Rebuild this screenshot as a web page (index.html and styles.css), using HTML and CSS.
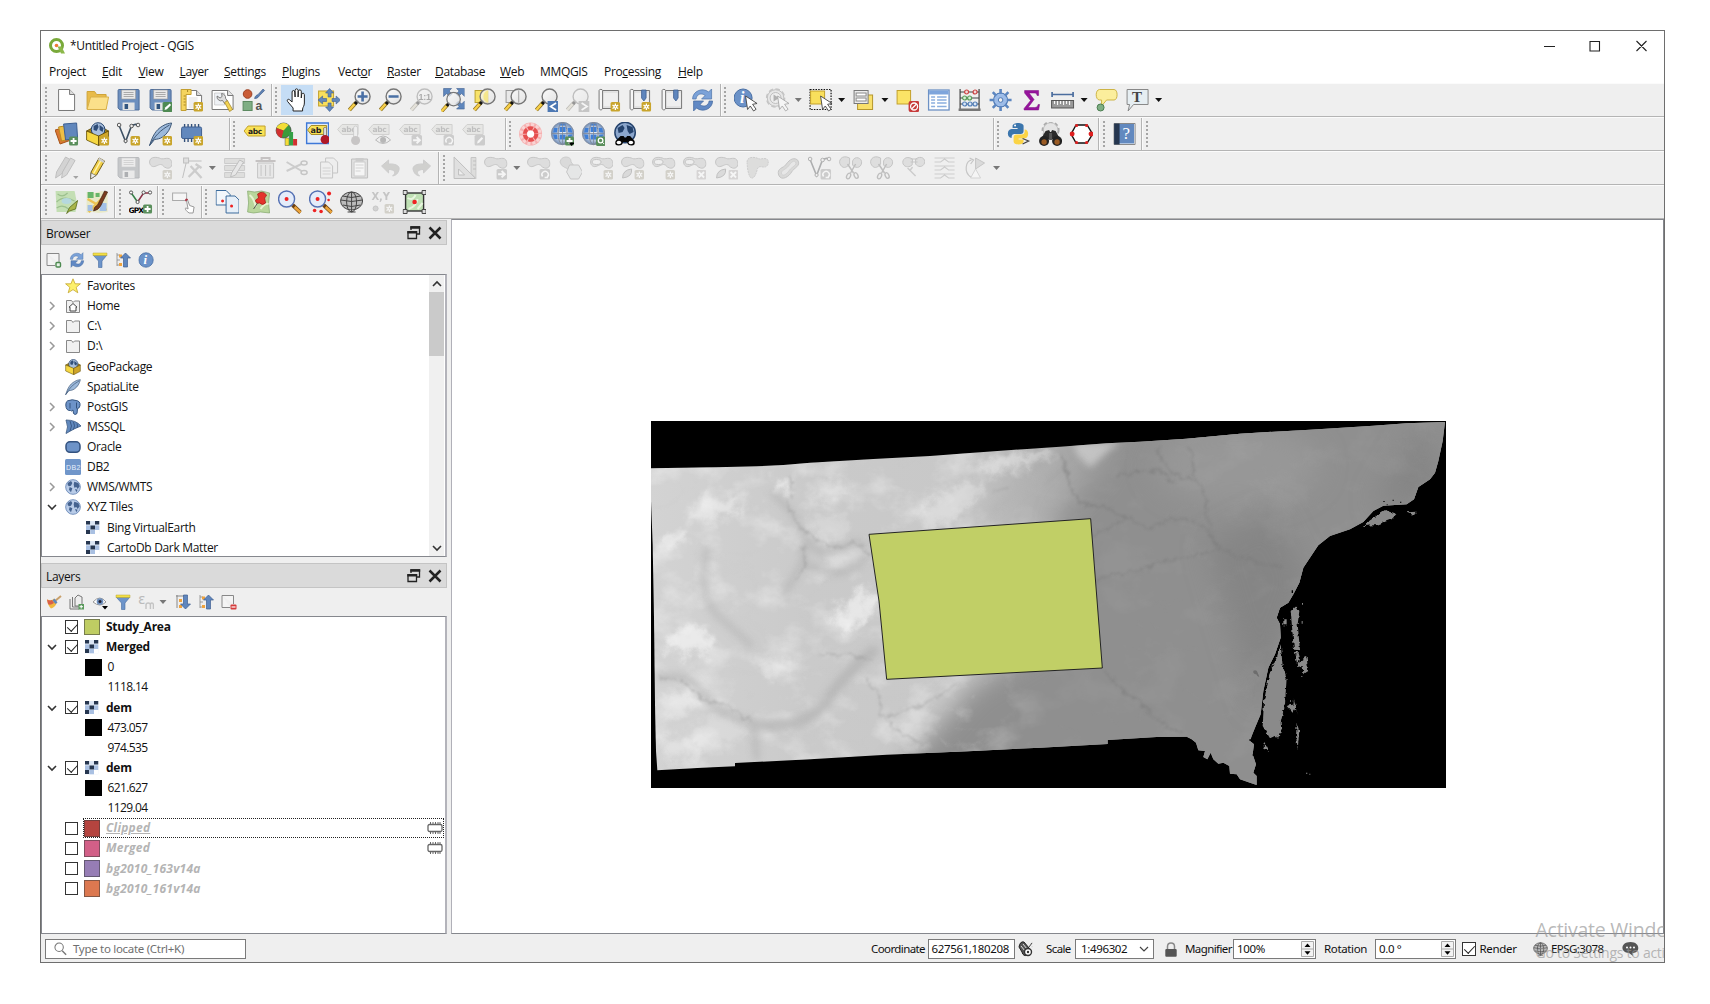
FILE: index.html
```html
<!DOCTYPE html>
<html lang="en">
<head>
<meta charset="utf-8">
<title>*Untitled Project - QGIS</title>
<link rel="stylesheet" href="styles.css">
</head>
<body>
<svg class="sprite" aria-hidden="true">
<defs>
<linearGradient id="lens" x1="0" y1="0" x2="1" y2="1"><stop offset="0" stop-color="#fff"/><stop offset="1" stop-color="#ddd"/></linearGradient>
<radialGradient id="ball"><stop offset="0" stop-color="#f2f5fa"/><stop offset=".6" stop-color="#b9c9e0"/><stop offset="1" stop-color="#6f8db8"/></radialGradient>
<symbol id="star" viewBox="0 0 24 24"><rect x="14" y="14" width="9.500" height="9.500" rx="1.500" fill="#c9a52c"/><path d="M18.800 15.500v6.600M15.900 17.100l5.700 3.400M21.600 17.100l-5.700 3.400" stroke="#fff" stroke-width="1.300"/><circle cx="18.800" cy="18.800" r="1.700" fill="#fff"/><circle cx="18.800" cy="18.800" r=".7" fill="#c9a52c"/></symbol>
<symbol id="plus" viewBox="0 0 24 24"><rect x="14.500" y="14.500" width="9" height="9" rx="1.500" fill="#5a8f5c"/><path d="M19 16v6M16 19h6" stroke="#fff" stroke-width="1.800"/></symbol>
<symbol id="gobadge" viewBox="0 0 24 24"><rect x="13" y="13" width="10.500" height="10.500" rx="1.500" fill="#999"/><path d="M14.500 18.200h6M18 15l3.300 3.200L18 21.400" fill="none" stroke="#fff" stroke-width="1.900"/></symbol>
<symbol id="rotbadge" viewBox="0 0 24 24"><rect x="13" y="13" width="10.500" height="10.500" rx="1.500" fill="#999"/><path d="M16 20.500a3.200 3.200 0 1 1 4.500.6M18 21.500h3.500" fill="none" stroke="#fff" stroke-width="1.500"/></symbol>
<symbol id="xbadge" viewBox="0 0 24 24"><rect x="14" y="14" width="9.500" height="9.500" rx="1" fill="#c3a9a9"/><path d="M16 16l5.500 5.500M21.500 16L16 21.500" stroke="#fff" stroke-width="1.800"/></symbol>
<symbol id="new" viewBox="0 0 24 24"><path d="M4 1.500h11l5 5v16H4z" fill="#fff" stroke="#777"/><path d="M15 1.500v5h5" fill="#ddd" stroke="#777"/></symbol>
<symbol id="open" viewBox="0 0 24 24"><path d="M1.500 21V3.500h7.500l2 3h9.500V21z" fill="#e8bb4a" stroke="#cfa438"/><path d="M1.500 21.500L5 9h18l-2.500 12.500z" fill="#fbe08a" stroke="#d9b14a"/></symbol>
<symbol id="save" viewBox="0 0 24 24"><path d="M2.500 1.500h19a1 1 0 0 1 1 1V22H3.500l-2-2V2.500a1 1 0 0 1 1-1z" fill="#6d8fbe" stroke="#4c6c9a"/><path d="M5 2h14v9H5z" fill="#e9e9e9" stroke="#999" stroke-width=".6"/><path d="M7 4.500h10M7 6.500h10M7 8.500h10" stroke="#999" stroke-width=".8"/><path d="M6 14.500h12V22H6z" fill="#e4e4e4"/><path d="M8 16h3.500v5H8z" fill="#32557f"/></symbol>
<symbol id="saveas" viewBox="0 0 24 24"><use href="#save"/><rect x="14" y="14" width="10" height="10" rx="1.500" fill="#4e8a52"/><path d="M16 22l.6-2.400 4.600-4 1.300 1.500-4.200 4.200z" fill="#fff"/></symbol>
<symbol id="layout" viewBox="0 0 24 24"><path d="M4 2.500h13l5 5v14H4z" fill="#fff" stroke="#777"/><path d="M17 2.500v5h5" fill="#ddd" stroke="#777"/><path d="M1.500 1.500h10v5h-5v16h-5z" fill="#f5d45e" stroke="#c39e2e"/><path d="M4 8h2M4 11h2M4 14h2M4 17h2M8 2v2" stroke="#a98523"/><path d="M9 9h9v11H9z" fill="#eee"/><use href="#star"/></symbol>
<symbol id="manager" viewBox="0 0 24 24"><path d="M1.500 2.500h16l5 5v14h-21z" fill="#fff" stroke="#777"/><path d="M17 2.500v5h5.500" fill="#e5e5e5" stroke="#777"/><path d="M4 5h10v12H4z" fill="#eef1f5" stroke="#bbb" stroke-width=".6"/><path d="M6.500 8a4 4 0 0 0 5.500 4.500l2 3 3-2.200-2-3A4.300 4.300 0 0 0 11 5.500l.5 3-2 1.500z" fill="#ddd" stroke="#666" stroke-width=".8"/><path d="M14 14.500l2.800-2L22 21.500l-3 2z" fill="#f3d354" stroke="#9b7d20" stroke-width=".7"/></symbol>
<symbol id="style" viewBox="0 0 24 24"><circle cx="6" cy="6" r="4.300" fill="#c95c36" stroke="#9c3f20"/><path d="M13 10.500c1-4 3-3 4-4.500L21.500 1l1.500 1.500-5 5c-1 1-1.500 3-5 3z" fill="#5f83b5" stroke="#405f8b" stroke-width=".7"/><rect x="1.500" y="13.500" width="9" height="9" fill="#7fae84" stroke="#5c8a61"/><text x="14" y="22" font-family="Liberation Sans" font-weight="bold" font-size="12" fill="#555">a</text></symbol>
<symbol id="hand" viewBox="0 0 24 24"><path d="M8.500 23v-3L3 13.500c-1-1.500.5-3 2-1.700L7.500 14V4c0-2 2.500-2 2.700 0L10.500 9V2.300c.3-2 2.700-2 3 0V9l.3-5.800c.3-1.800 2.700-1.800 2.900 0V10l.4-3.600c.4-1.700 2.600-1.500 2.700.2V15c0 3-1.500 4-1.800 6v2z" fill="#fff" stroke="#222" stroke-width="1"/></symbol>
<symbol id="pan" viewBox="0 0 24 24"><rect x="2" y="3" width="15" height="15" fill="#f9df5c" stroke="#c3a12c"/><path d="M13 .5l4 4.500h-2.500v4h-3V5H9zM13 23.500l4-4.500h-2.500v-4h-3v4H9zM1.500 12L6 8v2.500h4v3H6V16zM24 12l-4.500-4v2.500h-4v3h4V16z" fill="#6288bd" stroke="#3f5f90" stroke-width=".6"/></symbol>
<symbol id="mag" viewBox="0 0 24 24"><path d="M8.500 14.500L1.800 22" stroke="#8a6f1d" stroke-width="4"/><path d="M7 16L1.800 22" stroke="#f7cf4a" stroke-width="2.600"/><path d="M10.500 12.500L7.500 16" stroke="#111" stroke-width="3"/><circle cx="15" cy="8.500" r="7.500" fill="url(#lens)" fill-opacity=".75" stroke="#777" stroke-width="1.400"/></symbol>
<symbol id="zin" viewBox="0 0 24 24"><use href="#mag"/><path d="M15 3.500v10M10 8.500h10" stroke="#4a70a5" stroke-width="2.600"/></symbol>
<symbol id="zout" viewBox="0 0 24 24"><use href="#mag"/><path d="M10 8.500h10" stroke="#4a70a5" stroke-width="2.600"/></symbol>
<symbol id="z11" viewBox="0 0 24 24"><use href="#mag"/><text x="9" y="12" font-family="Liberation Sans" font-weight="bold" font-size="9" fill="#444">1:1</text></symbol>
<symbol id="zfull" viewBox="0 0 24 24"><path d="M3 .5h8L8.500 3l3 3-2.500 2.500-3-3L3 8.500zM24 .5h-8L18.500 3l-3 3 2.500 2.500 3-3L24 8.500zM24 21h-8l2.500-2.500-3-3 2.500-2.500 3 3 3-3z" fill="#5e86bc" stroke="#3f5f90" stroke-width=".6"/><g transform="translate(-.5 3.500) scale(.9)"><use href="#mag" width="24" height="24"/></g></symbol>
<symbol id="zsel" viewBox="0 0 24 24"><rect x="2.500" y="2.500" width="13" height="12" fill="#f8e36a" stroke="#bba22f"/><use href="#mag"/><path d="M15.500 2.500a6.300 6.300 0 0 0 0 12.200z" fill="#f5e57a" opacity=".8"/></symbol>
<symbol id="zlay" viewBox="0 0 24 24"><rect x="2.500" y="2.500" width="13" height="12" fill="#e8e8e8" stroke="#999"/><use href="#mag"/><path d="M15 2.500v12" stroke="#999" stroke-width=".7"/></symbol>
<symbol id="zlast" viewBox="0 0 24 24"><use href="#mag"/><rect x="13" y="13" width="11" height="11" fill="#4d78b3"/><path d="M21.500 15l-5.500 3.500 5.500 3.500" stroke="#fff" fill="none" stroke-width="1.700"/></symbol>
<symbol id="znext" viewBox="0 0 24 24"><use href="#mag"/><rect x="13" y="13" width="11" height="11" fill="#888"/><path d="M16 15l5.500 3.500L16 22" stroke="#fff" fill="none" stroke-width="1.700"/></symbol>
<symbol id="map" viewBox="0 0 24 24"><path d="M6 2.500h16v18H4" fill="#e2e2e2" stroke="#777"/><path d="M7 5h14v13H7z" fill="#efefef"/><path d="M2.500 2.500c0-1.500 3.500-1.500 3.500 0v17.500c0 2.500-3.500 2.500-3.500 0z" fill="#f6f6f6" stroke="#777"/></symbol>
<symbol id="mapnew" viewBox="0 0 24 24"><use href="#map"/><use href="#star"/></symbol>
<symbol id="mark" viewBox="0 0 24 24"><path d="M14 2h4.500v8l-2.200 3-2.300-3z" fill="#5f86bd" stroke="#3f5f90" stroke-width=".8"/></symbol>
<symbol id="bmnew" viewBox="0 0 24 24"><use href="#map"/><use href="#mark"/><use href="#star"/></symbol>
<symbol id="bm" viewBox="0 0 24 24"><use href="#map"/><use href="#mark"/></symbol>
<symbol id="refresh" viewBox="0 0 24 24"><path d="M2 11C2 3 12-1 18 4l3-3v10H11l3.500-3.500C11 4.500 6 6 5.500 11z" fill="#7ba2d8" stroke="#4d74aa" stroke-width=".7"/><path d="M22 13c0 8-10 12-16 7l-3 3V13h10l-3.500 3.500C13 19.500 18 18 18.500 13z" fill="#6189c4" stroke="#44699e" stroke-width=".7"/></symbol>
<symbol id="cursor" viewBox="0 0 24 24"><path d="M12 8l11.500 7.500-4.500.8 3.500 5-2.500 1.700-3.300-5-2.700 3.500z" fill="#fff" stroke="#444" stroke-width=".9"/></symbol>
<symbol id="info" viewBox="0 0 24 24"><circle cx="9.500" cy="10" r="9" fill="#6b92c8" stroke="#486ea4"/><text x="6.500" y="15.500" font-family="Liberation Serif" font-style="italic" font-weight="bold" font-size="16" fill="#fff">i</text></symbol>
<symbol id="ident" viewBox="0 0 24 24"><use href="#info"/><use href="#cursor"/></symbol>
<symbol id="gear" viewBox="0 0 24 24"><circle cx="12" cy="12" r="7" fill="#a9c6ee" stroke="#4d78b4" stroke-width="1.200"/><path d="M12 1v5M12 18v5M1 12h5M18 12h5M4.200 4.200l3.600 3.600M16.200 16.200l3.600 3.600M4.200 19.800l3.600-3.600M16.200 7.800l3.600-3.600" stroke="#5c86c0" stroke-width="2.600"/><circle cx="12" cy="12" r="6" fill="#9dbce8"/><circle cx="12" cy="12" r="2.300" fill="#efefef" stroke="#4d78b4"/></symbol>
<symbol id="action" viewBox="0 0 24 24"><circle cx="10" cy="10" r="8.300" fill="#ddd" stroke="#777" stroke-width="1"/><circle cx="10" cy="10" r="9" fill="none" stroke="#888" stroke-width="1.600" stroke-dasharray="4.500 2.500"/><circle cx="10" cy="10" r="5.500" fill="#eee" stroke="#777"/><path d="M8 6.500l5.500 3.500L8 13.500z" fill="#555"/><use href="#cursor"/></symbol>
<symbol id="select" viewBox="0 0 24 24"><rect x="1.500" y="1.500" width="21" height="20" fill="#efefef" stroke="#111" stroke-width="1.200" stroke-dasharray="1.500 1.200"/><rect x="2" y="3" width="14" height="13" fill="#f9df5c" stroke="#c3a12c"/><use href="#cursor"/></symbol>
<symbol id="selform" viewBox="0 0 24 24"><rect x="6" y="7" width="15" height="14.500" fill="#f9e06a" stroke="#b5962c"/><rect x="2.500" y="2.500" width="14" height="13" fill="#eee" stroke="#777"/><rect x="4.500" y="5" width="10" height="3" fill="#fff" stroke="#888"/><rect x="4.500" y="10" width="10" height="3" fill="#fff" stroke="#888"/></symbol>
<symbol id="desel" viewBox="0 0 24 24"><rect x="1.500" y="2.500" width="13.500" height="13.500" fill="#fbe366" stroke="#c3a12c"/><rect x="13" y="13" width="11" height="11" rx="2" fill="#c73b3b"/><circle cx="18.500" cy="18.500" r="3.500" fill="none" stroke="#fff" stroke-width="1.300"/><path d="M16 21l5-5" stroke="#fff" stroke-width="1.200"/></symbol>
<symbol id="table" viewBox="0 0 24 24"><rect x="2" y="2" width="20.500" height="20" fill="#fff" stroke="#6d91c5" stroke-width="1.300"/><path d="M2.500 2.500h19.500v4H2.500z" fill="#7ea5dc"/><path d="M4.500 9h4M10.500 9h9.500M4.500 12h4M10.500 12h9.500M4.500 15h4M10.500 15h9.500M4.500 18.500h4M10.500 18.500h9.500" stroke="#8aaede" stroke-width="1.700"/></symbol>
<symbol id="abacus" viewBox="0 0 24 24"><path d="M2.500 1v20M21.500 1v20M2 4h20M2 10h20M2 16h20" stroke="#444" stroke-width="1.200"/><path d="M1 20.500h22V23H1z" fill="#777"/><g stroke-width="1.200" fill="#f1dada" stroke="#c44"><circle cx="9" cy="4" r="2"/><circle cx="17.500" cy="4" r="2"/></g><g stroke-width="1.200" fill="#d8f0d8" stroke="#5a9a5a"><circle cx="7" cy="10" r="2"/><circle cx="12" cy="10" r="2"/></g><g stroke-width="1.200" fill="#dae6f6" stroke="#5580b8"><circle cx="7" cy="16" r="2"/><circle cx="12.500" cy="16" r="2"/><circle cx="17.500" cy="16" r="2"/></g></symbol>
<symbol id="sigma" viewBox="0 0 24 24"><path d="M5 2.500h14v5h-1.500c-.5-2-1-2.500-3-2.500H9.500l5 6.500-6 8h6.500c2.500 0 3-1 3.500-3H20l-1 5.500H4.500v-1.500l6.500-8-6-7.500z" fill="#96149c" stroke="#7b0f80" stroke-width=".5"/></symbol>
<symbol id="ruler" viewBox="0 0 24 24"><path d="M1.500 6.500h21M1.500 4v5M22.500 4v5" stroke="#4b6d9e" stroke-width="1.700"/><rect x="1" y="12.500" width="22" height="7.500" fill="#999" stroke="#555"/><path d="M4 13v3M7 13v4M10 13v3M13 13v4M16 13v3M19 13v4" stroke="#fff" stroke-width="1"/></symbol>
<symbol id="tip" viewBox="0 0 24 24"><path d="M5 1.500h14.500c4 0 4 10.500 0 10.500H12l-5 6V12H5c-4.500 0-4.500-10.500 0-10.500z" fill="#fbee9c" stroke="#cdb445"/><circle cx="6" cy="19.500" r="3.500" fill="#7fae84" stroke="#4b7d50"/></symbol>
<symbol id="text" viewBox="0 0 24 24"><path d="M1.500 1.500h21v15H8l-5.500 6.500 1.500-6.500H1.500z" fill="#e6eef2" stroke="#888"/><text x="6.500" y="14" font-family="Liberation Serif" font-weight="bold" font-size="15" fill="#444">T</text></symbol>
<symbol id="dsm" viewBox="0 0 24 24"><path d="M.5 8l12-3 4 13-11 4z" fill="#d97832" stroke="#a75217"/><path d="M4 5l12-2 3 13-12 3z" fill="#eebf45" stroke="#ba8d22"/><path d="M9 2l13-1 1 15-12 2z" fill="#6187bc" stroke="#3d5f92"/><use href="#plus"/></symbol>
<symbol id="gpkg" viewBox="0 0 24 24"><path d="M1 9l11-6 11 6-10 5z" fill="#a5821c" stroke="#5f4a00" stroke-width=".8"/><circle cx="12.500" cy="7.500" r="6.800" fill="#a9bfdd" stroke="#24446f"/><path d="M8 4l4-2 1 3-2 4-3-1zM14 3l4 3-1 4-3-2z" fill="#2f4d78"/><path d="M1 9l12 5v9.500L1 18z" fill="#f6d843" stroke="#5f4a00" stroke-width=".8"/><path d="M13 14l10-5v9.500l-10 5z" fill="#cfa52a" stroke="#5f4a00" stroke-width=".8"/></symbol>
<symbol id="gpkgn" viewBox="0 0 24 24"><use href="#gpkg"/><use href="#star"/></symbol>
<symbol id="vee" viewBox="0 0 24 24"><path d="M2.500 3.500l6.500 16L14.500 5q3-4 7-2" fill="none" stroke="#3c5064" stroke-width="1.600"/><g fill="#efefef" stroke="#555"><circle cx="2.500" cy="3" r="1.800"/><circle cx="9" cy="19" r="1.600"/><circle cx="15" cy="4" r="1.800"/><circle cx="21.500" cy="3" r="1.800"/></g></symbol>
<symbol id="veen" viewBox="0 0 24 24"><use href="#vee"/><use href="#star"/></symbol>
<symbol id="feather" viewBox="0 0 24 24"><path d="M1 23.500C4 14 7 8 14 4c4-2.500 6-2.500 9-3-1 5-4 11-9 14-3 2-5 2-8 2.500z" fill="#9cb9db" stroke="#3d5675"/><path d="M1 23.500C6 14 12 8 21 3" fill="none" stroke="#3d5675"/></symbol>
<symbol id="feathern" viewBox="0 0 24 24"><use href="#feather"/><use href="#star"/></symbol>
<symbol id="chip" viewBox="0 0 24 24"><path d="M5 2v18M8.500 2v18M12 2v18M15.500 2v18M19 2v18" stroke="#33507a" stroke-width="1.400"/><rect x="2" y="5" width="20" height="11.500" rx="1.500" fill="#6288bd" stroke="#3f5f90"/></symbol>
<symbol id="chipn" viewBox="0 0 24 24"><use href="#chip"/><use href="#star"/></symbol>
<symbol id="abc" viewBox="0 0 24 24"><path d="M1.500 9l4-5h17v10h-17z" fill="#f9e256" stroke="#c3a12c"/><text x="5.500" y="12" font-family="DejaVu Sans" font-weight="bold" font-size="7.500" fill="#222">abc</text></symbol>
<symbol id="abcg" viewBox="0 0 24 24"><path d="M1 7.500l4.500-5h16v10h-16z" fill="#ddd9c6" stroke="#a9a48c"/><text x="5" y="10.500" font-family="DejaVu Sans" font-weight="bold" font-size="7.500" fill="#777">abc</text></symbol>
<symbol id="pie" viewBox="0 0 24 24"><circle cx="9" cy="8.500" r="7.500" fill="#3b9a3b" stroke="#444" stroke-width=".7"/><path d="M9 8.500L2 6a7.500 7.500 0 0 1 12-3z" fill="#f3dd36"/><path d="M9 8.500L2 6c-1 4 0 8 5 10z" fill="#d13030"/><path d="M10.500 16h4v7.500h-4z" fill="#f3dd36" stroke="#555" stroke-width=".5"/><path d="M14.500 10h4v13.500h-4z" fill="#35a046"/><path d="M18.500 17h4v6.500h-4z" fill="#d13030"/></symbol>
<symbol id="abpin" viewBox="0 0 24 24"><rect x="1" y="1" width="22" height="20.500" fill="#e4ecf8" stroke="#3d78d8" stroke-width="1.500"/><path d="M2 8l3.500-4.500H21v9H5.500z" fill="#f9e256" stroke="#a48c28"/><text x="5" y="11.500" font-family="DejaVu Sans" font-weight="bold" font-size="8" fill="#222">ab</text><path d="M18 6a2 2 0 0 1 3 0v8h-3z" fill="#ddd" stroke="#555" stroke-width=".6"/><circle cx="19.500" cy="17.500" r="4.500" fill="#b01827"/></symbol>
<symbol id="abpg" viewBox="0 0 24 24"><use href="#abcg"/><path d="M17 6a2 2 0 0 1 4 0v10h-4z" fill="#eee" stroke="#888" stroke-width=".7"/><circle cx="19" cy="18.500" r="4.500" fill="#a88080"/></symbol>
<symbol id="abeye" viewBox="0 0 24 24"><use href="#abcg"/><path d="M8 18q7.500-8 15 0-7.500 7-15 0z" fill="#eee" stroke="#666"/><circle cx="15.500" cy="18" r="3" fill="#666"/></symbol>
<symbol id="abgo" viewBox="0 0 24 24"><use href="#abcg"/><use href="#gobadge"/></symbol>
<symbol id="abrot" viewBox="0 0 24 24"><use href="#abcg"/><use href="#rotbadge"/></symbol>
<symbol id="abed" viewBox="0 0 24 24"><use href="#abcg"/><rect x="13" y="13" width="10.500" height="10.500" rx="1.500" fill="#999"/><path d="M15.500 21.500l.6-2.400 4-4 1.500 1.500-4 4.200z" fill="#fff"/></symbol>
<symbol id="ring" viewBox="0 0 24 24"><circle cx="12" cy="12" r="11.500" fill="#f6b0b0"/><circle cx="12" cy="12" r="9.500" fill="none" stroke="#f9d4d4" stroke-width="3" stroke-dasharray="3 2"/><circle cx="12" cy="12" r="5.800" fill="none" stroke="#e65050" stroke-width="4" stroke-dasharray="5 1"/><circle cx="12" cy="12" r="3.500" fill="#fff"/></symbol>
<symbol id="globe" viewBox="0 0 24 24"><circle cx="12" cy="11.500" r="11.200" fill="url(#ball)" stroke="#8792a4"/><path d="M9 5h6v5H9zM9 12.500h6v5H9zM3.500 6H7l-.5 4.500H2.500zM2.500 12.500h4l.5 4.500H4zM17 6h3.500l1.200 4.500h-4zM17.700 12.500h4L20 17h-3zM9 1.500h6v2H9z" fill="#3f7fd6"/><ellipse cx="12" cy="11.500" rx="4.500" ry="11" fill="none" stroke="#7c8798"/><path d="M12 1v21M1 11.500h22" fill="none" stroke="#7c8798" stroke-width=".8"/></symbol>
<symbol id="globe1" viewBox="0 0 24 24"><use href="#globe"/><use href="#plus"/><path d="M18 20.500h6l-3 3.500z"/></symbol>
<symbol id="globe2" viewBox="0 0 24 24"><use href="#globe"/><rect x="14.500" y="14.500" width="9.500" height="9.500" rx="1.500" fill="#5a8f5c"/><circle cx="19" cy="18.500" r="2.300" fill="none" stroke="#fff" stroke-width="1.300"/><path d="M20.500 20l2 2" stroke="#fff"/></symbol>
<symbol id="earth" viewBox="0 0 24 24"><circle cx="12" cy="12" r="11" fill="#b9cce8" stroke="#6f8dbb" stroke-width="1.400"/><path d="M4 6l5-3 2 3-2 4-3 1-2-2zM7 12l4 2-2 6-3-4zM14 4l6 2 2 5-3 4-2-3-3 1-1-5zM15 15l4 1-2 4z" fill="#44628f"/></symbol>
<symbol id="binoc" viewBox="0 0 24 24"><path d="M7 9l3.500-1 1 2h1l1-2L17 9l4.500 8H2.500z" fill="#2a2a2a"/><path d="M10.500 11h3v7h-3z" fill="#555"/><circle cx="5.500" cy="19" r="5" fill="#222"/><circle cx="18.500" cy="19" r="5" fill="#222"/></symbol>
<symbol id="search" viewBox="0 0 24 24"><circle cx="12.500" cy="10.500" r="10.200" fill="#8ba6cc" stroke="#24426c" stroke-width="1.500"/><path d="M5 6l5-3 2 3-2 4-4 1zM14 3l6 2 1 5-4 2-2-3z" fill="#24426c"/><path d="M8 14h3l1 1.500h1.500l1-1.500h3l4.500 5q1 4.500-3 4.500-4 0-4.500-3.500h-4Q10 23.500 6 23.500q-4.500 0-3-4.500z" fill="#050505"/><ellipse cx="6.300" cy="20.500" rx="2.300" ry="1.700" fill="#fff"/><ellipse cx="18.300" cy="20.500" rx="2.300" ry="1.700" fill="#fff"/></symbol>
<symbol id="python" viewBox="0 0 24 24"><path d="M6 6V4c0-4 11-4 11 0v5c0 2-1 3-3 3H8c-2 0-3 1-3 4-5 0-5-9 0-9h6V6z" fill="#3c76ad"/><path d="M18 7.500c5 0 4.500 9 0 9h-6v1h5v2c0 4-10 4-10 0v-4c0-2 1-3 3-3h5c2 0 3-1 3-3z" fill="#fbd446"/><circle cx="8.500" cy="3.500" r="1" fill="#fff"/><path d="M16 16.500l6 2.500-6 3" fill="none" stroke="#444" stroke-width="1.300"/></symbol>
<symbol id="binog" viewBox="0 0 24 24"><circle cx="12" cy="8" r="8" fill="none" stroke="#aaa" stroke-width="2" stroke-dasharray="3.500 2.500"/><circle cx="12" cy="8" r="7.300" fill="#e4e4e4" stroke="#b5b5b5" stroke-width=".8"/><use href="#binoc"/><circle cx="5.500" cy="20" r="2.700" fill="#9a5b24"/><circle cx="18.500" cy="20" r="2.700" fill="#9a5b24"/></symbol>
<symbol id="hex" viewBox="0 0 24 24"><path d="M6.500 3h11L23 12l-5.500 9h-11L1.500 12z" fill="#fff" stroke="#111" stroke-width="1.400"/><g fill="#df2020"><circle cx="2.500" cy="12" r="2.500"/><circle cx="21.500" cy="12" r="2.500"/><circle cx="7" cy="3.500" r="1.600"/><circle cx="17" cy="3.500" r="1.600"/><circle cx="7" cy="20.500" r="1.600"/><circle cx="17" cy="20.500" r="1.600"/></g></symbol>
<symbol id="help" viewBox="0 0 24 24"><path d="M1.500 1.500h21v21h-21z" fill="#fff" stroke="#888"/><path d="M6 2h15.500v19.500H6z" fill="#6289bf"/><path d="M1.500 1.500H7v21H1.500z" fill="#25364f"/><text x="10" y="17.500" font-family="Liberation Serif" font-size="17" fill="#fff">?</text></symbol>
<symbol id="pencils" viewBox="0 0 24 24"><path d="M1 22l1-6L11 1l4.500 2.500L7 18z" fill="#aaa" stroke="#777"/><path d="M7 22l1-6 8-14 4.500 2.500L12 19z" fill="#b5b5b5" stroke="#777"/><path d="M18.500 20h5.500l-2.700 3z" fill="#333"/></symbol>
<symbol id="pencil" viewBox="0 0 24 24"><path d="M5 23l.5-7L13.500 2l5.500 3-8 14z" fill="#f2cf47" stroke="#6d5b1c"/><path d="M5.500 17l5 2.500L5 23z" fill="#eee" stroke="#555" stroke-width=".6"/><path d="M13.500 1.500L19 5l-1 2-5.500-3z" fill="#ccc"/><path d="M15 5L8 17.500" stroke="#fff5b0" stroke-width="1.500"/></symbol>
<symbol id="blob" viewBox="0 0 24 24"><path d="M1 6c0-6 8-5 11-3.500 3 1.500 9-3 11 3 1.500 5-2 7.500-5 6.500-4-1-3-3.500-6-3.500S6 12 3 10C1.500 9 1 7.500 1 6z" fill="#c4c4c4" stroke="#888"/></symbol>
<symbol id="blobn" viewBox="0 0 24 24"><use href="#blob"/><use href="#star"/></symbol>
<symbol id="nodes" viewBox="0 0 24 24"><path d="M3 22L7 5h15" fill="none" stroke="#777"/><rect x="4" y="2" width="5" height="5" fill="#ccc" stroke="#777"/><path d="M9 21l10-10M11 10l11 12M16 8l6 4" stroke="#999" stroke-width="2.400"/></symbol>
<symbol id="rows" viewBox="0 0 24 24"><path d="M2 2.500h20v5H2zM2 9.500h20v5H2zM2 16.500h20v5H2z" fill="#c9c9ae" stroke="#999"/><path d="M8 21l1-4 8-13 4 2-8 13z" fill="#ddd" stroke="#777"/></symbol>
<symbol id="trash" viewBox="0 0 24 24"><path d="M4 7h16v15H4z" fill="#ddd" stroke="#888"/><path d="M7.500 9v11M12 9v11M16.500 9v11" stroke="#888"/><path d="M2 5h20M8 4V2h8v2" fill="none" stroke="#a77" stroke-width="2"/></symbol>
<symbol id="cut" viewBox="0 0 24 24"><path d="M2 6l15 9M2 15l15-7" stroke="#999" stroke-width="2"/><ellipse cx="19.500" cy="7" rx="3" ry="2" fill="none" stroke="#888" stroke-width="1.500"/><ellipse cx="19.500" cy="16.500" rx="3" ry="2" fill="none" stroke="#888" stroke-width="1.500"/></symbol>
<symbol id="copy" viewBox="0 0 24 24"><path d="M9 2h8l4 4v11H9z" fill="#eee" stroke="#888"/><path d="M4 6h8l4 4v12H4z" fill="#eee" stroke="#888"/><path d="M6 12h8M6 15h8M6 18h8" stroke="#aaa"/></symbol>
<symbol id="paste" viewBox="0 0 24 24"><path d="M4 3h16v19H4z" fill="#ccc" stroke="#777"/><path d="M6.500 6h11v14h-11z" fill="#fff" stroke="#999"/><path d="M8 2h8v3.500H8z" fill="#999"/><path d="M8 9h8M8 12h8M8 15h5" stroke="#aaa"/></symbol>
<symbol id="undo" viewBox="0 0 24 24"><path d="M3 10l7-6v4c9-.5 12 3 10 7-1 3-3 4.500-6 5 4-3.500 2-6.500-4-6.500V17z" fill="#aaa28c" stroke="#999"/></symbol>
<symbol id="square" viewBox="0 0 24 24"><path d="M1.500 1v21.500H23zM6 13l6 6H6z" fill="#ccc" stroke="#777" fill-rule="evenodd"/><path d="M18.500 1.500h5v21l-5-5z" fill="#c9c4b0" stroke="#888"/><path d="M20.500 5h3M20.500 9h3M20.500 13h3" stroke="#777"/></symbol>
<symbol id="bgo" viewBox="0 0 24 24"><use href="#blob"/><use href="#gobadge"/></symbol>
<symbol id="brot" viewBox="0 0 24 24"><use href="#blob"/><use href="#rotbadge"/></symbol>
<symbol id="simp" viewBox="0 0 24 24"><path d="M1.500 6q1-5 6-5t5 5l3 4-4 5q-3-3-6-4T1.500 6z" fill="#bbb" stroke="#999"/><path d="M11 9h9l4 7-4 7h-8l-4-7z" fill="#d5d9df" stroke="#888"/></symbol>
<symbol id="bring" viewBox="0 0 24 24"><use href="#blob"/><ellipse cx="7" cy="6" rx="4.500" ry="2.500" fill="#efefef" stroke="#888"/><use href="#star"/></symbol>
<symbol id="bpart" viewBox="0 0 24 24"><use href="#blob"/><path d="M2 22q0-8 9-9 1 8-9 9z" fill="#bbb" stroke="#777"/><use href="#star"/></symbol>
<symbol id="bdelr" viewBox="0 0 24 24"><use href="#blob"/><ellipse cx="7" cy="6" rx="4.500" ry="2.500" fill="#efefef" stroke="#888"/><use href="#xbadge"/></symbol>
<symbol id="bdelp" viewBox="0 0 24 24"><use href="#blob"/><path d="M2 22q0-8 9-9 1 8-9 9z" fill="#bbb" stroke="#777"/><use href="#xbadge"/></symbol>
<symbol id="bshape" viewBox="0 0 24 24"><path d="M1.500 6c0-6 8-5 11-3.500 3 1.500 8-2 10 2 1 5-2 7-5 6.500-3-.5-5-1-6 3s-3 9-6 8c-3-2-4-12-4-16z" fill="#c4c4bc" stroke="#999" stroke-dasharray="2 .8"/></symbol>
<symbol id="boff" viewBox="0 0 24 24"><path d="M2 19c-2-7 5-7 7-10s7-9 12-5c4 6-4 8-6 12s-10 10-13 3z" fill="#bdb9ae" stroke="#888"/><path d="M5 18c-1-4 4-4 7-8s5-6 7-4c2 3-4 5-6 8s-6 7-8 4z" fill="#ddd" stroke="#999" stroke-width=".7"/></symbol>
<symbol id="vrot" viewBox="0 0 24 24"><use href="#vee"/><use href="#rotbadge"/></symbol>
<symbol id="split" viewBox="0 0 24 24"><path d="M11 2C3-2-1 5 2 9c3 5 8 1 9-1zM14 5c2-6 10-3 9 2-1 6-7 5-9 2z" fill="#c4c8c4" stroke="#888"/><path d="M9 8l6 9M17 8l-5 9" stroke="#777" stroke-width="1.500"/><ellipse cx="10" cy="20" rx="1.800" ry="3" transform="rotate(25 10 20)" fill="none" stroke="#777" stroke-width="1.400"/><ellipse cx="17.500" cy="19.500" rx="1.800" ry="3" transform="rotate(-25 17.500 19.500)" fill="none" stroke="#777" stroke-width="1.400"/></symbol>
<symbol id="merge" viewBox="0 0 24 24"><path d="M11 3C4-1 0 4 1.500 8c2 4 7 3 9 1zM14 3c6-4 10 0 9 4-2 5-7 4-9 1zM9 3h7M9 6h7" fill="#c4c8c4" stroke="#888"/><path d="M6 12l8 8M11 11l-3 4" stroke="#999" stroke-width="1.500"/></symbol>
<symbol id="trim" viewBox="0 0 24 24"><path d="M2 2h20M2 6h6l4-3 4 3h6M2 10h20M2 14h6l4-3 4 3h6M2 18h20M2 22h6l4-3 4 3h6" fill="none" stroke="#999" stroke-width="1.100"/></symbol>
<symbol id="rotf" viewBox="0 0 24 24"><path d="M12 2v11l9-6z" fill="#bbb" stroke="#888"/><path d="M10 21H7C0 16 2 5 8 4M6 2l4 2-3 4" fill="none" stroke="#888" stroke-width="1.200"/><path d="M7 22l5-9 5 9z" fill="#fff" stroke="#aaa"/></symbol>
<symbol id="relief" viewBox="0 0 24 24"><path d="M1 1h19l2 10-1 11H2z" fill="#c4dfb4"/><path d="M3 4q5 4 10-1M2 12q7-7 18-1M2 18q6-4 12 1" fill="none" stroke="#9cc08e" stroke-width="1.200"/><ellipse cx="12" cy="11" rx="5" ry="3" fill="#b5d8de"/><path d="M12 23.500l3-6 8-7-2 8.500-6 2z" fill="#a9b64a" stroke="#57691b" stroke-width=".8"/></symbol>
<symbol id="osm" viewBox="0 0 24 24"><path d="M1 2l8 1 7-2 6 1v20l-9 1-6-1-6 1z" fill="#e8e9c8"/><path d="M3 22L16 9M2 9l19 11" stroke="#ecc253" stroke-width="2.500"/><path d="M14 13h7v8h-7zM2 15h5v6H2z" fill="#a3c0e6"/><path d="M2 2h6v6H2zM10 3h4v4h-4z" fill="#67b56a"/><path d="M8 21q0-4 4-6L19 1l3 1-7 14q-2 4-7 5z" fill="#7b3c1d" stroke="#402010" stroke-width=".7"/></symbol>
<symbol id="gpx" viewBox="0 0 24 24"><path d="M9 12l6-9h6" fill="none" stroke="#8b3348" stroke-width="1.500"/><path d="M2 2l7 10" stroke="#357f46" stroke-width="1.500"/><g fill="#fff" stroke="#555"><circle cx="2.500" cy="2.500" r="1.600"/><circle cx="9" cy="12" r="1.600"/><circle cx="15" cy="2.500" r="1.600"/><circle cx="21.500" cy="2.500" r="1.600"/></g><text x="0" y="23.500" font-family="DejaVu Sans" font-weight="bold" font-size="7.500" textLength="15">GPX</text><use href="#plus"/></symbol>
<symbol id="annot" viewBox="0 0 24 24"><rect x="1" y="3" width="14" height="7.500" fill="#f5f5f5" stroke="#aaa"/><circle cx="15" cy="10" r="1.500" fill="#a34"/><path d="M15 11l1.500 8-2-1c-2 0 0 3 3 5h4l1-6-4.500-1.500L16 10" fill="#fff" stroke="#999"/></symbol>
<symbol id="coord" viewBox="0 0 24 24"><path d="M.5.500h10l4 4V15h-14z" fill="#f3f7fb" stroke="#3a6a9c"/><path d="M10.500 6h9l4 4v13h-13z" fill="#e6eff8" stroke="#3a6a9c"/><circle cx="7" cy="11" r="1.500" fill="#e22"/><circle cx="16" cy="16" r="1.500" fill="#e22"/></symbol>
<symbol id="pin" viewBox="0 0 24 24"><path d="M1 1l7 1 7-1 8 2-1 10 1 10-9-1-7 1-6-1 1-9z" fill="#b9d69c" stroke="#83a86c" stroke-width=".7"/><path d="M3 5q5 4 6 12M14 19q4-6 8-5" fill="none" stroke="#e8f3d2" stroke-width="2"/><path d="M11 13l-4 6" stroke="#555"/><path d="M11 4q5-4 9 1-1 2-2 3l1 5q-3 3-6 0-4 1-4-3l3-2z" fill="#e4342c" stroke="#a01815" stroke-width=".7"/></symbol>
<symbol id="mag2" viewBox="0 0 24 24"><path d="M15 15l8 7.500" stroke="#6b4013" stroke-width="3.800"/><path d="M17 17l6 5.500" stroke="#eda53b" stroke-width="2.600"/><circle cx="9" cy="9" r="8" fill="#e4ecfa" stroke="#5571b4" stroke-width="1.400"/><circle cx="9" cy="9" r="2" fill="#e22"/></symbol>
<symbol id="mag3" viewBox="0 0 24 24"><use href="#mag2"/><g fill="#e22"><circle cx="20.500" cy="3.500" r="2"/><circle cx="20" cy="10" r="1.300"/><circle cx="6" cy="20.500" r="1.800"/><circle cx="12.500" cy="21.500" r="1.800"/></g></symbol>
<symbol id="wire" viewBox="0 0 24 24"><ellipse cx="12" cy="11" rx="11" ry="9" fill="#bbb" stroke="#444"/><ellipse cx="12" cy="12" rx="5" ry="10" fill="none" stroke="#444"/><path d="M12 2v20M1 10q11 3 22 0M3 15q9 3 18 0M3 6q9 3 18 0M8 22h8" fill="none" stroke="#444"/></symbol>
<symbol id="xy" viewBox="0 0 24 24"><text x="1" y="10" font-family="DejaVu Sans" font-weight="bold" font-size="10" fill="#888" textLength="18">X,Y</text><circle cx="5" cy="18.500" r="2.500" fill="#aaa" stroke="#888"/><use href="#star"/></symbol>
<symbol id="ext" viewBox="0 0 24 24"><rect x="3" y="3" width="18" height="18" fill="#bfe0b4" stroke="#333" stroke-width="1.400"/><path d="M5 8q5 3 8-3M6 19q7-2 9-10M15 19l5-6" stroke="#e9f5df" stroke-width="2" fill="none"/><g fill="#ddd" stroke="#444"><path d="M.5.500h4v4h-4zM19.500.500h4v4h-4zM.5 19.500h4v4h-4zM19.500 19.500h4v4h-4z"/></g><circle cx="12" cy="12" r="2.300" fill="#e22"/></symbol>
<symbol id="add" viewBox="0 0 16 16"><path d="M1 1.500h12v9M9 13.500H1v-12" fill="#f4f4f4" stroke="#888"/><rect x="10" y="10.500" width="4.500" height="4.500" rx="1" fill="#e8f3e8" stroke="#4d8a50" stroke-width="1.400"/></symbol>
<symbol id="funnel" viewBox="0 0 16 16"><path d="M1 3h14l-5 6v6.500H6.500V9z" fill="#6d94ca" stroke="#466c9f" stroke-width=".6"/><path d="M1 1h14v2.500H1z" fill="#f3df45" stroke="#b9a430" stroke-width=".5"/></symbol>
<symbol id="up" viewBox="0 0 16 16"><path d="M2 1v13M2 3h3M2 8h3M2 13h3" stroke="#888" stroke-width=".8"/><path d="M4 2.500h3v3H4zM4 11h3v3H4z" fill="#f0a33c"/><path d="M10.500 1L15.500 6h-3v9h-4V6h-3z" fill="#5f86bd" stroke="#3f5f90" stroke-width=".7"/></symbol>
<symbol id="down" viewBox="0 0 16 16"><path d="M2 1v13M1 2h8" stroke="#888"/><path d="M4 5h3v3H4zM4 11h3v3H4z" fill="#f0a33c"/><path d="M10.500 15L15.500 10h-3V1h-4v9h-3z" fill="#5f86bd" stroke="#3f5f90" stroke-width=".7"/></symbol>
<symbol id="broom" viewBox="0 0 16 16"><path d="M9 7l6-5" stroke="#c9a06a" stroke-width="2"/><path d="M1 5.500q5 2 7-1l3 4q-2 5-6 6Q2 12 1 5.500z" fill="#f1b83f"/><path d="M6.500 6.500l2-2 3 4-2 1.500z" fill="#5f86bd"/><path d="M1 5.500q3 1.500 5 .5l2 3Q4 12 2 10z" fill="#d9604a"/></symbol>
<symbol id="layadd" viewBox="0 0 16 16"><path d="M1 5v10h9M3.500 3v10h7M6 4l3-3 4 2v9H6z" fill="#eee" stroke="#777"/><rect x="9.500" y="10" width="5.500" height="5.500" fill="#5a9a5c"/><path d="M12.200 11v3.500M10.500 12.700H14" stroke="#fff"/></symbol>
<symbol id="eye" viewBox="0 0 16 16"><path d="M1 8q7-8 13 0-6 6-13 0z" fill="#fff" stroke="#999"/><circle cx="8" cy="7.500" r="3.300" fill="#6d8fbe"/><circle cx="8" cy="7.500" r="1.500" fill="#223"/><path d="M10 12h6l-3 3.500z"/></symbol>
<symbol id="eps" viewBox="0 0 16 16"><text x="0" y="10" font-family="DejaVu Sans" font-size="14" fill="#bbb">ε</text><path d="M8 15v-4q0-2 2.200-2t2.200 2v4M12.400 11q0-2 1.500-2t1.500 2v4" fill="none" stroke="#c4c4c4" stroke-width="1.400"/></symbol>
<symbol id="rem" viewBox="0 0 16 16"><path d="M1 1.500h11.500V10M9 13.500H1v-12" fill="#f4f4f4" stroke="#888"/><rect x="9.500" y="10.500" width="6" height="5" rx="1" fill="#d43c3c"/><path d="M10.500 13h4" stroke="#fff" stroke-width="1.200"/></symbol>
<symbol id="fav" viewBox="0 0 16 16"><path d="M8 .8l2.100 5h5.300l-4.200 3.500 1.600 5.500L8 11.600l-4.800 3.200 1.600-5.500L.6 5.800h5.300z" fill="#fdf06a" stroke="#c4a62d" stroke-width=".8"/></symbol>
<symbol id="folder" viewBox="0 0 16 16"><path d="M1.500 2.500h5l1.500 2 1.500-1.500H14.500v11.500h-13z" fill="#f1f1f1" stroke="#888"/></symbol>
<symbol id="home" viewBox="0 0 16 16"><use href="#folder"/><path d="M8 5.500l4 3.700h-1V13H5V9.200H4z" fill="#fff" stroke="#444"/></symbol>
<symbol id="pg" viewBox="0 0 16 16"><path d="M4 1.500q3-1.500 7 0 4.500.5 4 5-.5 3-2.500 3l-.5 5q-2 2-3.500 0L8 11l-1.500 1-1-.5Q1 12 .8 6 1 1.500 4 1.500z" fill="#6d93c8" stroke="#34547f"/><path d="M5 4v5.500M11.500 3.500v6" stroke="#34547f" fill="none"/></symbol>
<symbol id="ms" viewBox="0 0 16 16"><path d="M1 1q10 0 15 6Q10 9 1 14.500 4 8 1 1z" fill="#6088bd" stroke="#34547f" stroke-width=".8"/><path d="M5 2q3 5 0 10M8.500 3q2 4 0 7.500M12 4.500q1 2.500 0 4.500" fill="none" stroke="#34547f" stroke-width=".9"/></symbol>
<symbol id="ora" viewBox="0 0 16 16"><rect x="1" y="2.800" width="14" height="10.500" rx="4" fill="#6d93c8" stroke="#33527f" stroke-width="1.500"/></symbol>
<symbol id="db2" viewBox="0 0 16 16"><rect width="16" height="16" rx="1.500" fill="#7096ca"/><text x="1" y="10.500" font-family="Liberation Sans" font-size="7" fill="#e6eefa" textLength="14">DB2</text></symbol>
<symbol id="tile" viewBox="0 0 15 15"><path d="M0 0h15v15H0z" fill="#dce6f4"/><path d="M0 5h5v5H0zM10 5h5v5h-5zM5 10h5v5H5z" fill="#a9c0e2"/><path d="M0 0h4.500v4H0zM10 0h5v4h-5zM5 5h5v4.500H5zM0 10h4.500v4.500H0z" fill="#26364f"/><path d="M10 10h5v5h-5z" fill="#fff"/></symbol>
<symbol id="mem" viewBox="0 0 16 14"><path d="M3.500 1v12M6 1v12M8.500 1v12M11 1v12M13 1v12" stroke="#666"/><rect x="1" y="3.500" width="14" height="7" rx="1.500" fill="#fff" stroke="#666" stroke-width="1.300"/></symbol>
<symbol id="float" viewBox="0 0 16 16"><path d="M5 5V2h8.500v7h-3M2 7h8.500v6.500H2z" fill="none" stroke="#222" stroke-width="1.300"/><path d="M4.300 2.500h9.900M1.300 7.300h9.900" stroke="#222" stroke-width="2.600"/></symbol>
<symbol id="close" viewBox="0 0 16 16"><path d="M2.500 2.500l11 11M13.500 2.500l-11 11" stroke="#222" stroke-width="2.500"/></symbol>
<symbol id="right" viewBox="0 0 12 12"><path d="M4 2l4 4-4 4" fill="none" stroke="#999" stroke-width="1.500"/></symbol>
<symbol id="open2" viewBox="0 0 12 12"><path d="M2 4l4 4 4-4" fill="none" stroke="#333" stroke-width="1.600"/></symbol>
</defs>
</svg>

<main class="window">
<header class="title">
<svg class="logo" viewBox="0 0 16 16"><circle cx="7.500" cy="7.500" r="6" fill="none" stroke="#79a93a" stroke-width="3"/><path d="M8.500 8.500h4l3.500 7h-4z" fill="#8cb84a"/><circle cx="7.500" cy="7.500" r="1.800" fill="#ee7a35"/></svg>
<span>*Untitled Project - QGIS</span>
<svg class="ctl" viewBox="0 0 104 12"><path d="M0 6.500h11M46 1.500h9.500v9.500H46zM92.500 1l10 10M102.500 1l-10 10" fill="none" stroke="#222" stroke-width="1.100"/></svg>
</header>
<nav class="menu"><span>Pro<u>j</u>ect</span><span><u>E</u>dit</span><span><u>V</u>iew</span><span><u>L</u>ayer</span><span><u>S</u>ettings</span><span><u>P</u>lugins</span><span>Vect<u>o</u>r</span><span><u>R</u>aster</span><span><u>D</u>atabase</span><span><u>W</u>eb</span><span>MMQGIS</span><span>Pro<u>c</u>essing</span><span><u>H</u>elp</span></nav>

<section class="bars">
<div class="row">
<div class="seg w230"><svg><use href="#new"/></svg><svg><use href="#open"/></svg><svg><use href="#save"/></svg><svg><use href="#saveas"/></svg><svg><use href="#layout"/></svg><svg><use href="#manager"/></svg><svg><use href="#style"/></svg></div>
<div class="seg w448"><svg class="on"><use href="#hand"/></svg><svg><use href="#pan"/></svg><svg><use href="#zin"/></svg><svg><use href="#zout"/></svg><svg class="off"><use href="#z11"/></svg><svg><use href="#zfull"/></svg><svg><use href="#zsel"/></svg><svg><use href="#zlay"/></svg><svg><use href="#zlast"/></svg><svg class="off"><use href="#znext"/></svg><svg><use href="#mapnew"/></svg><svg><use href="#bmnew"/></svg><svg><use href="#bm"/></svg><svg><use href="#refresh"/></svg></div>
<div class="seg rest"><svg><use href="#ident"/></svg><svg class="off"><use href="#action"/></svg><i class="dd dim"></i><svg><use href="#select"/></svg><i class="dd"></i><svg><use href="#selform"/></svg><i class="dd"></i><svg><use href="#desel"/></svg><svg><use href="#table"/></svg><svg><use href="#abacus"/></svg><svg><use href="#gear"/></svg><svg><use href="#sigma"/></svg><svg><use href="#ruler"/></svg><i class="dd"></i><svg><use href="#tip"/></svg><svg><use href="#text"/></svg><i class="dd"></i></div>
</div>
<div class="row">
<div class="seg w188"><svg><use href="#dsm"/></svg><svg><use href="#gpkgn"/></svg><svg><use href="#veen"/></svg><svg><use href="#feathern"/></svg><svg><use href="#chipn"/></svg></div>
<div class="seg w276"><svg><use href="#abc"/></svg><svg><use href="#pie"/></svg><svg><use href="#abpin"/></svg><svg class="off"><use href="#abpg"/></svg><svg class="off"><use href="#abeye"/></svg><svg class="off"><use href="#abgo"/></svg><svg class="off"><use href="#abrot"/></svg><svg class="off"><use href="#abed"/></svg></div>
<div class="seg w488"><svg><use href="#ring"/></svg><svg><use href="#globe1"/></svg><svg><use href="#globe2"/></svg><svg><use href="#search"/></svg></div>
<div class="seg w105"><svg><use href="#python"/></svg><svg><use href="#binog"/></svg><svg><use href="#hex"/></svg></div>
<div class="seg w43"><svg><use href="#help"/></svg></div>
<div class="seg rest"></div>
</div>
<div class="row">
<div class="seg w398"><svg class="off"><use href="#pencils"/></svg><svg><use href="#pencil"/></svg><svg class="off"><use href="#save"/></svg><svg class="off"><use href="#blobn"/></svg><svg class="off"><use href="#nodes"/></svg><i class="dd dim"></i><svg class="off"><use href="#rows"/></svg><svg class="off"><use href="#trash"/></svg><svg class="off"><use href="#cut"/></svg><svg class="off"><use href="#copy"/></svg><svg class="off"><use href="#paste"/></svg><svg class="off"><use href="#undo"/></svg><svg class="off flip"><use href="#undo"/></svg></div>
<div class="seg rest"><svg class="off"><use href="#square"/></svg><svg class="off"><use href="#bgo"/></svg><i class="dd dim"></i><svg class="off"><use href="#brot"/></svg><svg class="off"><use href="#simp"/></svg><svg class="off"><use href="#bring"/></svg><svg class="off"><use href="#bpart"/></svg><svg class="off"><use href="#bring"/></svg><svg class="off"><use href="#bdelr"/></svg><svg class="off"><use href="#bdelp"/></svg><svg class="off"><use href="#bshape"/></svg><svg class="off"><use href="#boff"/></svg><svg class="off"><use href="#vrot"/></svg><svg class="off"><use href="#split"/></svg><svg class="off"><use href="#split"/></svg><svg class="off"><use href="#merge"/></svg><svg class="off"><use href="#trim"/></svg><svg class="off"><use href="#rotf"/></svg><i class="dd dim"></i></div>
</div>
<div class="row">
<div class="seg w74"><svg><use href="#relief"/></svg><svg><use href="#osm"/></svg></div>
<div class="seg w43"><svg><use href="#gpx"/></svg></div>
<div class="seg w43"><svg><use href="#annot"/></svg></div>
<div class="seg rest"><svg><use href="#coord"/></svg><svg><use href="#pin"/></svg><svg><use href="#mag2"/></svg><svg><use href="#mag3"/></svg><svg><use href="#wire"/></svg><svg class="off"><use href="#xy"/></svg><svg><use href="#ext"/></svg></div>
</div>
</section>

<section class="work">
<aside class="docks">
<div class="dockhead"><span>Browser</span><svg><use href="#float"/></svg><svg><use href="#close"/></svg></div>
<div class="docktools"><svg><use href="#add"/></svg><svg><use href="#refresh"/></svg><svg><use href="#funnel"/></svg><svg><use href="#up"/></svg><svg viewBox="0 0 19 20"><use href="#info" width="24" height="24"/></svg></div>
<div class="tree browser">
<ul>
<li><b></b><svg><use href="#fav"/></svg>Favorites</li>
<li><b><svg><use href="#right"/></svg></b><svg><use href="#home"/></svg>Home</li>
<li><b><svg><use href="#right"/></svg></b><svg><use href="#folder"/></svg>C:\</li>
<li><b><svg><use href="#right"/></svg></b><svg><use href="#folder"/></svg>D:\</li>
<li><b></b><svg><use href="#gpkg"/></svg>GeoPackage</li>
<li><b></b><svg><use href="#feather"/></svg>SpatiaLite</li>
<li><b><svg><use href="#right"/></svg></b><svg><use href="#pg"/></svg>PostGIS</li>
<li><b><svg><use href="#right"/></svg></b><svg><use href="#ms"/></svg>MSSQL</li>
<li><b></b><svg><use href="#ora"/></svg>Oracle</li>
<li><b></b><svg><use href="#db2"/></svg>DB2</li>
<li><b><svg><use href="#right"/></svg></b><svg><use href="#earth"/></svg>WMS/WMTS</li>
<li><b><svg><use href="#open2"/></svg></b><svg><use href="#earth"/></svg>XYZ Tiles</li>
<li class="sub"><b></b><svg><use href="#tile"/></svg>Bing VirtualEarth</li>
<li class="sub"><b></b><svg><use href="#tile"/></svg>CartoDb Dark Matter</li>
</ul>
<div class="scroll"><svg class="flipv"><use href="#open2"/></svg><i></i><svg><use href="#open2"/></svg></div>
</div>
<div class="dockhead second"><span>Layers</span><svg><use href="#float"/></svg><svg><use href="#close"/></svg></div>
<div class="docktools low"><svg><use href="#broom"/></svg><svg><use href="#layadd"/></svg><svg><use href="#eye"/></svg><svg><use href="#funnel"/></svg><svg><use href="#eps"/></svg><i class="dd dim"></i><svg><use href="#down"/></svg><svg><use href="#up"/></svg><svg><use href="#rem"/></svg></div>
<div class="tree layers">
<ul>
<li class="lay"><b></b><em class="ck y"></em><i class="sw olive"></i>Study_Area</li>
<li class="lay"><b><svg><use href="#open2"/></svg></b><em class="ck y"></em><svg class="ras"><use href="#tile"/></svg>Merged</li>
<li class="leg"><i class="sw black"></i>0</li>
<li class="leg"><i class="sw"></i>1118.14</li>
<li class="lay"><b><svg><use href="#open2"/></svg></b><em class="ck y"></em><svg class="ras"><use href="#tile"/></svg>dem</li>
<li class="leg"><i class="sw black"></i>473.057</li>
<li class="leg"><i class="sw"></i>974.535</li>
<li class="lay"><b><svg><use href="#open2"/></svg></b><em class="ck y"></em><svg class="ras"><use href="#tile"/></svg>dem</li>
<li class="leg"><i class="sw black"></i>621.627</li>
<li class="leg"><i class="sw"></i>1129.04</li>
<li class="lay hid cur"><b></b><em class="ck"></em><div><i class="sw red"></i><u>Clipped</u><svg class="mem"><use href="#mem"/></svg></div></li>
<li class="lay hid"><b></b><em class="ck"></em><div><i class="sw pink"></i>Merged<svg class="mem"><use href="#mem"/></svg></div></li>
<li class="lay hid"><b></b><em class="ck"></em><i class="sw violet"></i>bg2010_163v14a</li>
<li class="lay hid"><b></b><em class="ck"></em><i class="sw orange"></i>bg2010_161v14a</li>
</ul>
</div>
</aside>

<div class="canvas">
<svg class="raster" viewBox="33 30 2385 1101">
<defs>
<clipPath id="land"><path d="M33 172L230 169 350 166 430 162 510 155 700 144 870 135 1000 125 1260 107 1400 97 1500 92 1640 83 1800 68 2010 56 2200 44 2300 37 2415 33 2408 90 2395 150 2385 185 2370 205 2335 228 2322 265 2300 280 2230 284 2200 300 2170 333 2130 355 2070 375 2035 403 2010 440 1990 470 1978 515 1960 550 1945 575 1920 590 1910 620 1920 640 1922 680 1905 730 1885 770 1870 840 1862 910 1845 950 1835 975 1830 990 1842 1000 1838 1030 1848 1060 1840 1085 1850 1095 1850 1122 1830 1115 1800 1105 1790 1090 1770 1088 1768 1065 1750 1055 1735 1058 1720 1045 1712 1025 1702 1045 1690 1038 1695 1020 1675 1018 1668 995 1655 985 1640 977 1550 978 1403 987 1403 999 1200 1010 1000 1020 740 1031 510 1045 285 1056 285 1066 185 1070 52 1078 48 1020 45 880 42 620 38 400 33 270z"/></clipPath>
<linearGradient id="base"><stop offset="0" stop-color="#d3d3d3"/><stop offset=".2" stop-color="#cacaca"/><stop offset=".38" stop-color="#c8c8c8"/><stop offset=".55" stop-color="#a0a0a0"/></linearGradient>
<linearGradient id="fade" x1="0" x2="1"><stop offset=".38" stop-color="#fff"/><stop offset=".5" stop-color="#222"/></linearGradient>
<mask id="west" maskUnits="userSpaceOnUse" x="0" y="0" width="2450" height="1150"><rect width="2450" height="1150" fill="url(#fade)"/></mask>
<filter id="b40" x="-50%" y="-50%" width="200%" height="200%"><feGaussianBlur stdDeviation="38"/></filter>
<filter id="b14" x="-50%" y="-50%" width="200%" height="200%"><feTurbulence type="fractalNoise" baseFrequency=".022" numOctaves="5" seed="9" result="n"/><feGaussianBlur in="SourceGraphic" stdDeviation="13" result="g"/><feDisplacementMap in="g" in2="n" scale="75" xChannelSelector="R" yChannelSelector="G"/></filter>
<filter id="soft" x="-50%" y="-50%" width="200%" height="200%"><feGaussianBlur stdDeviation="11"/></filter>
<filter id="b3" x="-10%" y="-10%" width="120%" height="120%"><feTurbulence type="fractalNoise" baseFrequency=".05" numOctaves="3" seed="4" result="n"/><feDisplacementMap in="SourceGraphic" in2="n" scale="28" xChannelSelector="R" yChannelSelector="G"/><feGaussianBlur stdDeviation="2.500"/></filter>
<filter id="rough" x="-2%" y="-2%" width="104%" height="104%"><feTurbulence type="fractalNoise" baseFrequency=".09" numOctaves="2" seed="7" result="n"/><feDisplacementMap in="SourceGraphic" in2="n" scale="12" xChannelSelector="R" yChannelSelector="G"/></filter>
<filter id="light" x="0" y="0" width="100%" height="100%"><feTurbulence type="fractalNoise" baseFrequency=".008 .01" numOctaves="8" seed="11"/><feColorMatrix values="0 0 0 0 1  0 0 0 0 1  0 0 0 0 1  3 0 0 0 -1.400"/></filter>
<filter id="dark" x="0" y="0" width="100%" height="100%"><feTurbulence type="turbulence" baseFrequency=".006 .007" numOctaves="5" seed="23"/><feColorMatrix values="0 0 0 0 .6  0 0 0 0 .6  0 0 0 0 .6  0 -5 0 0 .9"/></filter>
</defs>
<rect x="33" y="30" width="2385" height="1101"/>
<g clip-path="url(#land)">
<rect x="33" y="30" width="2385" height="1101" fill="url(#base)"/>
<path d="M1440 60L1380 190 1270 300 1220 700 1000 830 880 960 700 1180H2600V-60H1500z" fill="#8f8f8f" filter="url(#b40)"/>
<ellipse cx="1790" cy="160" rx="250" ry="120" fill="#979797" filter="url(#b40)"/>
<path d="M1900 300L1700 400 1850 900 2000 500zM2350 30L2200 280H2420z" fill="#858585" filter="url(#b40)"/>
<g fill="#fff" filter="url(#b14)" opacity=".55"><ellipse cx="150" cy="690" rx="75" ry="40"/><ellipse cx="430" cy="228" rx="30" ry="20"/><ellipse cx="570" cy="240" rx="70" ry="30" opacity=".5"/><ellipse cx="650" cy="600" rx="80" ry="40" transform="rotate(-35 650 600)"/><ellipse cx="930" cy="280" rx="110" ry="40" opacity=".6" transform="rotate(-30 930 280)"/><ellipse cx="1120" cy="150" rx="130" ry="22" opacity=".7" transform="rotate(-12 1120 150)"/><ellipse cx="110" cy="880" rx="50" ry="45" opacity=".6"/><ellipse cx="230" cy="290" rx="90" ry="30" opacity=".7" transform="rotate(-15 230 290)"/><ellipse cx="100" cy="390" rx="60" ry="14" transform="rotate(-40 100 390)"/><ellipse cx="560" cy="350" rx="60" ry="40" opacity=".4"/><ellipse cx="420" cy="770" rx="60" ry="25" opacity=".6"/><ellipse cx="240" cy="960" rx="80" ry="50" opacity=".4"/><ellipse cx="120" cy="1010" rx="70" ry="40" opacity=".6"/></g>
<path d="M1310 130L1350 170 1410 115 1440 95H1300z" fill="#ccc" filter="url(#soft)" opacity=".8"/>
<g mask="url(#west)"><rect x="33" y="30" width="2385" height="1101" filter="url(#light)" opacity=".32"/><rect x="33" y="30" width="2385" height="1101" filter="url(#dark)" opacity=".22"/></g>
<g fill="none" stroke="#b2b2b2" stroke-linecap="round" filter="url(#soft)" opacity=".75"><path stroke-width="32" d="M340 940Q500 960 560 870T700 720"/><path stroke-width="16" d="M400 250Q470 310 500 380T600 410 690 430M490 400V450Q450 520 440 540M500 460Q600 520 680 440M60 800Q140 780 190 850T340 930L350 1040"/><path stroke-width="22" opacity=".7" d="M200 420Q170 560 240 620T330 700M1060 300Q1150 230 1250 150"/></g>
<g fill="none" stroke="#787878" stroke-width="5" opacity=".48" filter="url(#b3)"><path d="M1270 130L1290 230 1320 275 1400 290 1460 320 1530 350 1590 325 1650 325 1700 355 1740 415 1640 440 1560 450 1500 480 1400 495 1370 510M1650 110L1665 200 1695 250 1700 310 1725 400 1800 440 1920 470M1550 115L1600 190 1660 210M1430 190L1560 175 1600 215M1350 380L1460 320M1390 780L1450 840 1500 870 1540 920 1620 965"/></g>
<g fill="none" stroke="#9c9c9c" stroke-width="5" opacity=".5" filter="url(#b3)"><path d="M440 270L480 350 530 385 600 415 640 390 690 430M490 400L500 460 470 500M60 800L130 810 180 860 250 880 330 930M680 800L720 860 720 910 760 950 850 1000M740 920L850 880 950 820M540 730H620L700 750M1100 230L1060 240M455 190V260"/></g>
<path d="M1840 779q10-4 12 4l6 14q-6 2-9-7-11-1-9-11z" fill="#6d6d6d"/>
</g>
<g fill="#8a8a8a" filter="url(#rough)"><path d="M2172 345L2190 325 2235 297 2270 308 2255 325 2210 342zM2300 304L2330 302 2325 314zM1952 600L1970 585 1978 600 1973 640 1980 718 1962 716zM1922 700L1928 765 1940 800 1935 880 1922 935 1925 965 1890 982 1868 945 1872 870 1888 790 1910 740zM1965 722L1975 724 1980 740 1978 755 1990 748 1990 735 2000 740 2005 780 1990 790 1988 765 1972 768zM1870 990L1885 1020 1872 1012zM1970 935L1978 960 1973 1015 1968 975zM1940 885L1960 880 1962 865 1975 915 1968 890 1958 905zM1930 625h10v18h-10zM1905 975L1920 965 1915 980z"/></g>
<path d="M2230 270h4v3h-4zM2258 266h3v4h-3zM2280 272h4v3h-4zM2240 280h3v3h-3zM1955 538h4v8h-4zM1828 985h5v4h-5zM1838 1030h5v4h-5zM1842 1078h5v5h-5zM1966 726h3v8h-3zM1974 748h4v6h-4z" fill="#000"/>
<path d="M1998 1085h4v3h-4zM2008 1088h3v3h-3zM1985 630h3v8h-3zM1986 576h3v5h-3zM1984 795h3v3h-3zM1950 868h3v4h-3z" fill="#888"/>
<path d="M687 370L1352 323 1387 771 740 805 717 570z" fill="#c1cf66" stroke="#232323" stroke-width="3"/>
</svg>
</div>
</section>

<footer class="status">
<label class="locate"><svg viewBox="0 0 16 16"><circle cx="7" cy="6" r="4.800" fill="none" stroke="#777" stroke-width="1.200"/><path d="M10.500 10l4.500 4.500" stroke="#777" stroke-width="1.600"/></svg>Type to locate (Ctrl+K)</label>
<span>Coordinate</span><span class="box">627561,180208</span>
<svg class="ic" viewBox="0 0 16 16"><path d="M1 6q1-6 5-5l5 6q2 5-1 7-5 2-6-3z" fill="#555" stroke="#222"/><path d="M3 5l4 5M5 3l4 5M12 3l3-2M13 6l2-.5" stroke="#ddd"/><circle cx="10" cy="11" r="3.500" fill="#fff" stroke="#333" stroke-width="1.400"/><circle cx="10" cy="11" r="1.200" fill="#333"/><path d="M11 6l3-4" stroke="#444"/></svg>
<span>Scale</span><span class="box combo">1:496302<svg viewBox="0 0 12 12"><path d="M2 4l4 4 4-4" fill="none" stroke="#444" stroke-width="1.200"/></svg></span>
<svg class="ic lock" viewBox="0 0 12 15"><path d="M2.500 7V4.500q0-3.500 3.500-3.500t3.500 3.500V7" fill="none" stroke="#888" stroke-width="1.500"/><rect x=".3" y="7" width="11.400" height="7.700" rx="1" fill="#555"/></svg>
<span>Magnifier</span><span class="box spin">100%<svg viewBox="0 0 13 16"><path d="M.5.500h12v15H.5zM.5 8h12" fill="#f3f3f3" stroke="#aaa"/><path d="M3.500 6L6.500 2.500 9.500 6zM3.500 10.200l3 3.500 3-3.500z"/></svg></span>
<span>Rotation</span><span class="box spin">0.0 °<svg viewBox="0 0 13 16"><path d="M.5.500h12v15H.5zM.5 8h12" fill="#f3f3f3" stroke="#aaa"/><path d="M3.500 6L6.500 2.500 9.500 6zM3.500 10.200l3 3.500 3-3.500z"/></svg></span>
<em class="ck y"></em><span class="up1">Render</span>
<svg class="ic"><use href="#wire"/></svg><span class="up1">EPSG:3078</span>
<svg class="ic bub" viewBox="0 0 17 16"><path d="M8.500 1c10 0 10 11 2 11l.5 3-4-3C-2 12-2 1 8.500 1z" fill="#555"/><g fill="#fff"><circle cx="5" cy="6.500" r="1"/><circle cx="8.500" cy="6.500" r="1"/><circle cx="12" cy="6.500" r="1"/></g></svg>
</footer>
<div class="mark"><p>Activate Windows</p><p class="small">Go to Settings to activate Windows.</p></div>
</main>
</body>
</html>
```
FILE: styles.css
```css
* { box-sizing: border-box; }
body { margin: 0; height: 1004px; background: #fff; overflow: hidden; padding: 30px 0 0 40px; font: 12px/16px "Open Sans", "Noto Sans", sans-serif; color: #111; letter-spacing: -0.33px; }
.sprite { position: absolute; width: 0; height: 0; }
svg { display: block; flex: none; }
u { text-underline-offset: 1px; text-decoration-thickness: 1px; }
.window { position: relative; width: 1625px; height: 933px; border: 1px solid #6e6e6e; background: #efefef; overflow: hidden; display: flex; flex-direction: column; }
.title { height: 29px; flex: none; background: #fff; display: flex; align-items: center; padding: 0 16px 0 8px; }
.title span { margin-left: 5px; flex: 1; }
.logo { width: 16px; height: 16px; }
.ctl { width: 104px; height: 12px; }
.menu { height: 23px; flex: none; background: #fff; padding: 1px 0 0 8px; display: grid; grid-template-columns: 53px 36.500px 41px 44.500px 58px 56px 49px 48px 65px 40px 64px 74px 60px; align-items: center; white-space: nowrap; }

.bars { flex: none; }
.row { display: flex; height: 34px; border-bottom: 1px solid #b4b4b4; border-top: 1px solid #fbfbfb; }
.seg { display: flex; align-items: center; border-right: 1px solid #b4b4b4; flex: none; box-shadow: inset 1px 0 #fafafa; }
.seg::before { content: ""; width: 3px; height: 26px; margin: 0 3.200px 0 3.800px; background: radial-gradient(circle at 1px 1px, #a5a5a5 1px, transparent 1.300px) 0 0 / 3px 4px; }
.seg svg { width: 31.180px; height: 24px; padding: 0 3.600px; }
.seg.rest { flex: 1; border-right: 0; }
.seg svg.on { height: 30px; padding: 3px 3.600px; background: #c5ddf5; }
.off { filter: grayscale(.85); opacity: .4; }
.flip { transform: scaleX(-1); }
.flipv { transform: scaleY(-1); }
.dd { width: 12.150px; height: 4px; flex: none; background: #111; clip-path: polygon(2px 0, 9px 0, 5.500px 4px); }
.dd.dim { background: #777; }
.w230 { width: 230.500px; } .w448 { width: 449px; } .w188 { width: 188.500px; } .w276 { width: 276px; }
.w488 { width: 488px; } .w105 { width: 105.500px; } .w43 { width: 43.300px; } .w398 { width: 398px; } .w74 { width: 74px; }

.work { flex: 1; min-height: 0; display: flex; gap: 4px; }
.docks { width: 406px; display: flex; flex-direction: column; padding-top: 1px; }
.dockhead { height: 25px; flex: none; display: flex; align-items: center; border: 1px solid #c4c4c4; background: #dadada; padding: 0 3px 0 4px; gap: 5px; }
.dockhead span { flex: 1; padding-top: 2px; }
.dockhead svg { width: 16px; height: 16px; }
.dockhead.second { margin-top: 6px; }
.docktools { height: 29px; flex: none; display: flex; align-items: center; gap: 7px; padding-left: 5px; }
.docktools.low { height: 28px; }
.docktools svg { width: 16px; height: 16px; }
.docktools .dd { margin: 0 -2px 0 -3.500px; }
.tree { border: 1px solid #85878d; border-right: 2px solid #b3b3ba; background: #fff; display: flex; }
.browser { height: 283px; flex: none; }
.layers { flex: 1; min-height: 0; }
ul { list-style: none; margin: 0; padding: 1px 0 0; flex: 1; }
li { display: flex; align-items: center; height: 20.130px; white-space: nowrap; }
li > b { width: 23px; padding-left: 3.500px; flex: none; }
li > b svg { width: 12px; height: 12px; }
li > svg { width: 16px; height: 16px; margin-right: 6px; }
li.sub > b { width: 44px; }
li.sub > svg { width: 13.500px; height: 13.500px; margin-right: 7.500px; }
.scroll { width: 15px; background: #f0f0f0; display: flex; flex-direction: column; align-items: center; margin-right: 1px; }
.scroll svg { width: 12px; height: 12px; margin: 3px 0 2px; }
.scroll i { width: 15px; height: 64px; background: #cacaca; margin-bottom: auto; }
.ck { width: 13.500px; height: 13.500px; border: 1px solid #333; background: #fff; flex: none; display: block; }
.ck.y::after { content: ""; display: block; width: 9px; height: 4.500px; border: solid #222; border-width: 0 0 1.300px 1.300px; transform: translate(1.300px, 2.300px) rotate(-47deg); }
.layers ul { padding-top: 0; }
.lay > b { width: 22.500px; }
.sw { width: 16.500px; height: 16.500px; flex: none; }
.lay .sw { margin: 0 6px 0 5.500px; border: 1px solid rgba(60, 60, 60, .55); }
.lay { font-weight: 700; letter-spacing: -0.24px; }
.lay svg.ras { width: 13.500px; height: 13.500px; margin: 0 7.500px 0 7px; }
.leg { padding-left: 43px; letter-spacing: -0.6px; }
.leg .sw { margin-right: 6px; }
.black { background: #000; } .olive { background: #bfcd63; } .red { background: #b5443f; } .pink { background: #d25f87; } .violet { background: #967db5; } .orange { background: #dc7850; }
.hid { font-style: italic; color: #b4b4b4; letter-spacing: 0.25px; }
.lay div { flex: 1; display: flex; align-items: center; height: 20px; margin: 0 1px 0 4.500px; border: 1px solid transparent; }
.lay.cur div { border: 1px dotted #222; }
.lay div .sw { margin-left: 0; }
.mem { width: 16px; height: 14px; margin-left: auto; }
.canvas { flex: 1; background: #fff; border: 1px solid #85878d; border-left: 1.500px solid #b0b0b8; padding: 200.500px 0 0 199px; }
.raster { width: 795px; height: 367px; }

.status { height: 28px; flex: none; display: flex; align-items: center; padding: 2px 0 0 3.500px; white-space: nowrap; font-family: "Noto Sans", "Open Sans", sans-serif; font-size: 11.500px; letter-spacing: -0.3px; }
.locate { width: 201.500px; height: 20px; background: #fff; border: 1px solid #7a7a7a; display: flex; align-items: center; gap: 6.500px; padding-left: 7px; color: #6f6f6f; margin-right: 625px; }
.locate svg { width: 14px; height: 14px; }
.status > span { width: 56.500px; letter-spacing: -0.6px; }
.status > .box { width: 87px; height: 20px; background: #fff; border: 1px solid #7a7a7a; padding-left: 3px; display: flex; align-items: center; letter-spacing: -0.35px; }
.status > .ic { width: 16px; height: 16px; margin: 0 12.500px 0 3px; }
.status > .ic + span { width: 29px; }
.status > .combo { width: 79px; padding-left: 5px; justify-content: space-between; }
.combo svg { width: 12px; height: 12px; margin-right: 3px; }
.status > .lock { width: 12px; height: 15px; margin: 0 8px 0 11px; }
.status > .lock + span { width: 48px; }
.status > .spin { width: 83px; justify-content: space-between; padding-right: 1px; }
.spin svg { width: 13px; height: 16px; }
.status > .spin + span { width: 51px; margin-left: 8px; letter-spacing: -0.35px; }
.status > .spin + span + .spin { width: 81px; margin-right: 6px; }
.status > .ck + span { margin-left: 4px; width: 35px; letter-spacing: -0.3px; }
.status > .ck + span + .ic { margin: 0 3px 0 18.500px; width: 15px; }
.status > .ic + .up1 { width: 54px; letter-spacing: -0.55px; }
.status > .bub { width: 17px; margin-left: 17px; }
.up1 { margin-top: -1px; }
.mark { position: absolute; left: 1494.500px; top: 885px; width: 400px; color: rgba(150, 150, 150, .68); font-size: 19.500px; line-height: 28px; letter-spacing: -0.25px; white-space: nowrap; }
.mark p { margin: 0; }
.mark .small { font-size: 14px; line-height: 18px; }
```
